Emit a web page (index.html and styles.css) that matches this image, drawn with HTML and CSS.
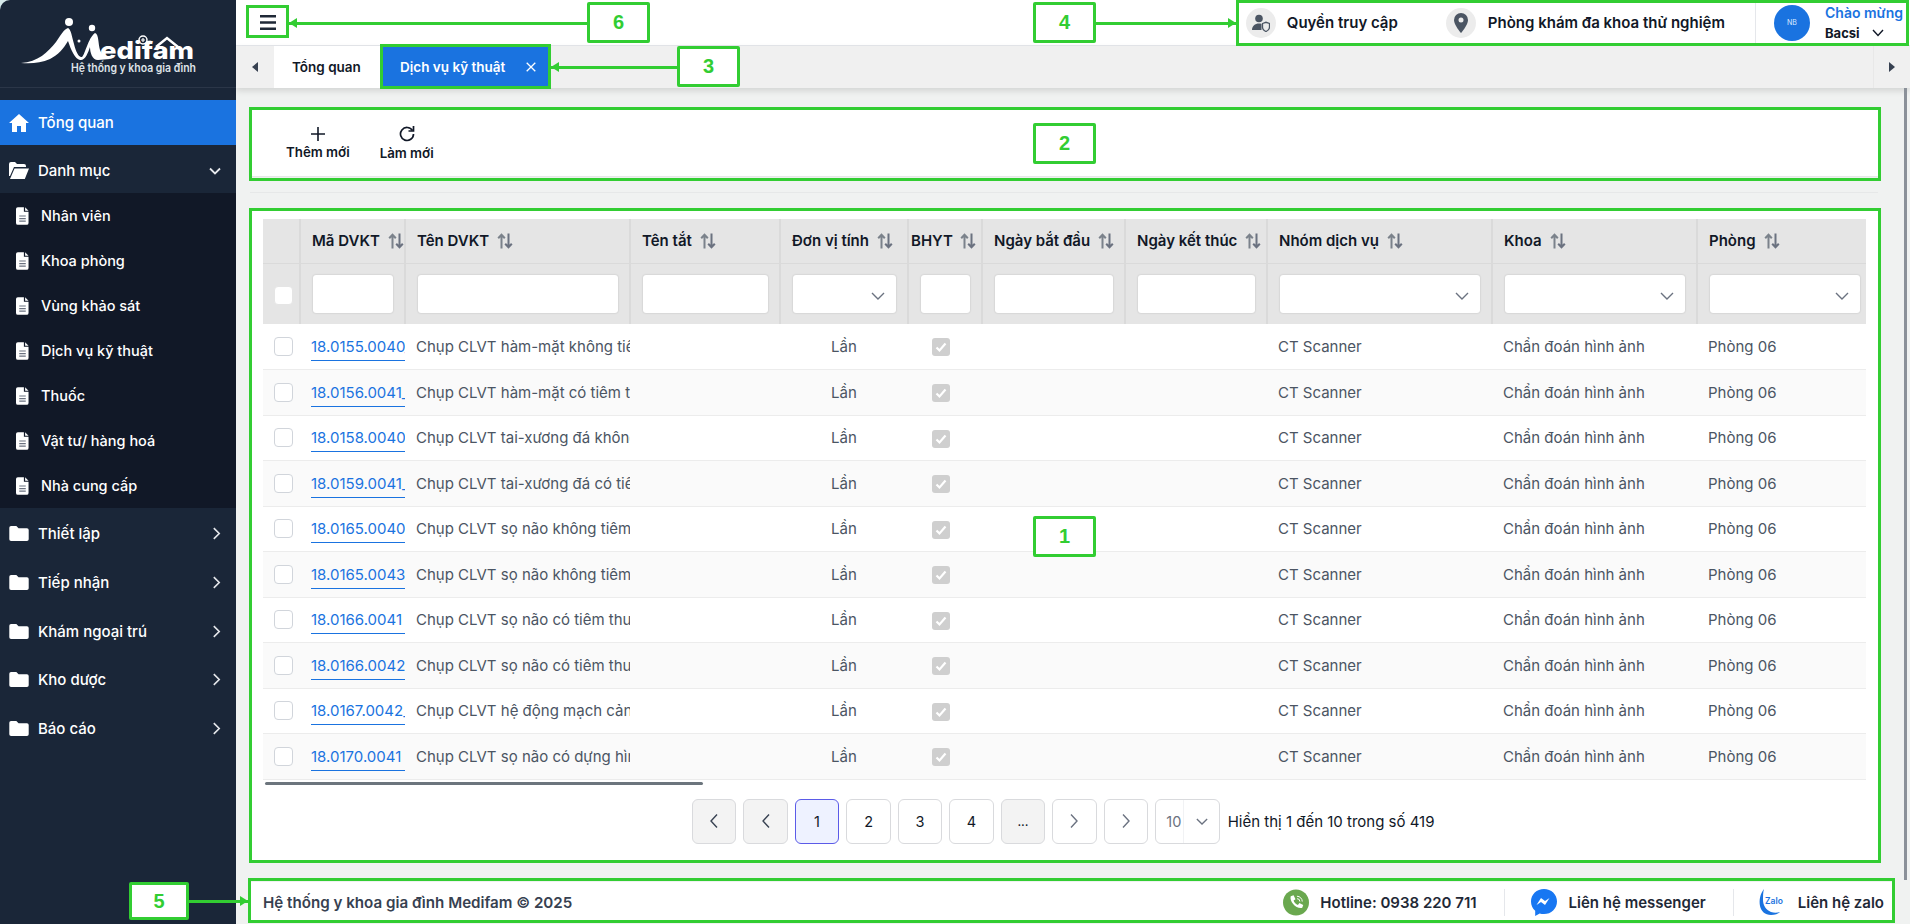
FILE: index.html
```html
<!DOCTYPE html>
<html lang="vi">
<head>
<meta charset="utf-8">
<title>Dịch vụ kỹ thuật</title>
<link rel="stylesheet" href="styles.css">
</head>
<body>
<svg class="defs" width="0" height="0" aria-hidden="true">
  <symbol id="i-sort" viewBox="0 0 16 16"><path d="M4.5 15.500V2M1.200 5.300l3.300-3.600 3.300 3.600" fill="none" stroke="#7b828b" stroke-width="2"/><path d="M11.500.5v13.500M8.200 10.700l3.300 3.600 3.300-3.600" fill="none" stroke="#6b7280" stroke-width="2"/></symbol>
  <symbol id="i-down" viewBox="0 0 14 8"><path d="M1 1l6 6 6-6" fill="none" stroke="#6b7280" stroke-width="1.400"/></symbol>
  <symbol id="i-file" viewBox="0 0 14 19"><path d="M2 0h6.500v5h5v12a2 2 0 0 1-2 2H2a2 2 0 0 1-2-2V2a2 2 0 0 1 2-2z" fill="#fff"/><path d="M9.800 0l3.700 3.800H9.800z" fill="#fff"/><path d="M3.500 9.500h7M3.500 12.300h7M3.500 15h7" stroke="#6b7280" stroke-width="1.200"/></symbol>
  <symbol id="i-folder" viewBox="0 0 22 17"><path d="M2 0h6l2.500 2.500H20a2 2 0 0 1 2 2V15a2 2 0 0 1-2 2H2a2 2 0 0 1-2-2V2a2 2 0 0 1 2-2z" fill="#fff"/></symbol>
  <symbol id="i-right" viewBox="0 0 10 14"><path d="M2 1l6 6-6 6" fill="none" stroke="#e5e7eb" stroke-width="1.800"/></symbol>
  <symbol id="i-page-l" viewBox="0 0 10 16"><path d="M8 1.500L2 8l6 6.500" fill="none" stroke="#374151" stroke-width="1.400"/></symbol>
  <symbol id="i-page-r" viewBox="0 0 10 16"><path d="M2 1.500L8 8l-6 6.500" fill="none" stroke="#6b7280" stroke-width="1.400"/></symbol>
  <symbol id="i-check" viewBox="0 0 18 18"><path d="M4.500 9.500l3 3 6-7" fill="none" stroke="#fff" stroke-width="2.200"/></symbol>
</svg>

<div class="app">
  <aside class="sidebar">
    <div class="brand">
      <svg class="logo" width="236" height="87" viewBox="0 0 236 87" role="img" aria-label="Medifam">
        <path d="M21 63C38 62 48 52 56 42 60 36 64 29 68 28 71 29 72 37 74 44 76 52 79 58 82 57 85 55 88 38 95 33 99 34 98 44 100 50 102 55 106 58 110 59L98 60C92 60 90 52 90 47 88 53 85 61 80 60 75 59 71 50 68 41 64 48 58 55 50 59 41 63 31 64 21 63Z" fill="#fff"/>
        <circle cx="69" cy="22" r="4" fill="#fff"/><circle cx="92" cy="28" r="3.200" fill="#fff"/>
        <circle cx="79" cy="41" r="1.500" fill="#fff"/>
        <circle cx="143" cy="40" r="4" fill="none" stroke="#fff" stroke-width="1.500"/>
        <path d="M143 38v4M141 40h4" stroke="#fff" stroke-width="1.200"/>
        <path d="M156 47l11-9 11 9" fill="none" stroke="#fff" stroke-width="2.500"/>
        <text class="logo-word" x="100" y="59" textLength="94" lengthAdjust="spacingAndGlyphs">edifam</text>
        <text class="logo-tag" x="71" y="71.500" textLength="125" lengthAdjust="spacingAndGlyphs">Hệ thống y khoa gia đình</text>
      </svg>
    </div>
    <nav class="nav">
      <a class="nav-item active">
        <svg class="nav-icon" width="20" height="18" viewBox="0 0 20 18"><path d="M10 0L0 9h3v9h5v-6h4v6h5V9h3z" fill="#fff"/></svg>
        <span>Tổng quan</span>
      </a>
      <a class="nav-item open">
        <svg class="nav-icon" width="20" height="17" viewBox="0 0 20 17"><path d="M0 2a2 2 0 0 1 2-2h4l2 2h7a2 2 0 0 1 2 2v1H5L1 14H0z" fill="#fff"/><path d="M5.500 6.500H20L15.800 17H1z" fill="#fff"/></svg>
        <span>Danh mục</span>
        <svg class="nav-caret" width="12" height="8" viewBox="0 0 12 8"><path d="M1 1.500l5 5 5-5" fill="none" stroke="#e5e7eb" stroke-width="1.800"/></svg>
      </a>
      <div class="sub">
        <a class="sub-item"><svg class="sub-icon" width="13" height="18"><use href="#i-file"/></svg><span>Nhân viên</span></a>
        <a class="sub-item"><svg class="sub-icon" width="13" height="18"><use href="#i-file"/></svg><span>Khoa phòng</span></a>
        <a class="sub-item"><svg class="sub-icon" width="13" height="18"><use href="#i-file"/></svg><span>Vùng khảo sát</span></a>
        <a class="sub-item"><svg class="sub-icon" width="13" height="18"><use href="#i-file"/></svg><span>Dịch vụ kỹ thuật</span></a>
        <a class="sub-item"><svg class="sub-icon" width="13" height="18"><use href="#i-file"/></svg><span>Thuốc</span></a>
        <a class="sub-item"><svg class="sub-icon" width="13" height="18"><use href="#i-file"/></svg><span>Vật tư/ hàng hoá</span></a>
        <a class="sub-item"><svg class="sub-icon" width="13" height="18"><use href="#i-file"/></svg><span>Nhà cung cấp</span></a>
      </div>
      <a class="nav-item closed"><svg class="nav-icon" width="20" height="15"><use href="#i-folder"/></svg><span>Thiết lập</span><svg class="nav-caret" width="9" height="13"><use href="#i-right"/></svg></a>
      <a class="nav-item closed"><svg class="nav-icon" width="20" height="15"><use href="#i-folder"/></svg><span>Tiếp nhận</span><svg class="nav-caret" width="9" height="13"><use href="#i-right"/></svg></a>
      <a class="nav-item closed"><svg class="nav-icon" width="20" height="15"><use href="#i-folder"/></svg><span>Khám ngoại trú</span><svg class="nav-caret" width="9" height="13"><use href="#i-right"/></svg></a>
      <a class="nav-item closed"><svg class="nav-icon" width="20" height="15"><use href="#i-folder"/></svg><span>Kho dược</span><svg class="nav-caret" width="9" height="13"><use href="#i-right"/></svg></a>
      <a class="nav-item closed"><svg class="nav-icon" width="20" height="15"><use href="#i-folder"/></svg><span>Báo cáo</span><svg class="nav-caret" width="9" height="13"><use href="#i-right"/></svg></a>
    </nav>
  </aside>

  <main class="main">
    <header class="topbar">
      <button class="burger" aria-label="Menu">
        <svg width="16" height="15" viewBox="0 0 16 15"><path d="M0 1.300h16M0 7.500h16M0 13.700h16" stroke="#1f2937" stroke-width="2.400"/></svg>
      </button>
      <div class="top-right">
        <div class="top-item">
          <span class="round-icon"><svg width="18" height="18" viewBox="0 0 18 18"><circle cx="7" cy="4.500" r="3.800" fill="#4b5563"/><path d="M0 16c0-4 3-6.500 7-6.500 1 0 2 .2 2.500.4V16z" fill="#4b5563"/><path d="M10.500 9.500l3.500-1.200 3.500 1.200v3.500c0 2.200-1.700 3.800-3.500 4.500-1.800-.7-3.500-2.300-3.500-4.500z" fill="none" stroke="#4b5563" stroke-width="1.300"/></svg></span>
          <span>Quyền truy cập</span>
        </div>
        <div class="top-item clinic">
          <span class="round-icon"><svg width="14" height="20" viewBox="0 0 14 20"><path d="M7 0a7 7 0 0 1 7 7c0 5-7 13-7 13S0 12 0 7a7 7 0 0 1 7-7z" fill="#4b5563"/><circle cx="7" cy="7" r="2.500" fill="#ececec"/></svg></span>
          <span>Phòng khám đa khoa thử nghiệm</span>
        </div>
        <div class="user">
          <span class="avatar">NB</span>
          <div class="user-text">
            <span class="hello">Chào mừng</span>
            <span class="user-name">Bacsi <svg width="12" height="8" viewBox="0 0 12 8"><path d="M1 1l5 5.500L11 1" fill="none" stroke="#111827" stroke-width="1.400"/></svg></span>
          </div>
        </div>
      </div>
    </header>

    <div class="tabbar">
      <button class="tab-arrow" aria-label="Trước"><svg width="6" height="10" viewBox="0 0 6 10"><path d="M6 0L0 5l6 5z" fill="#374151"/></svg></button>
      <a class="tab">Tổng quan</a>
      <a class="tab current">Dịch vụ kỹ thuật <svg class="tab-x" width="10" height="10" viewBox="0 0 10 10"><path d="M.7.700l8.600 8.600M9.300.700L.7 9.300" stroke="#fff" stroke-width="1.300"/></svg></a>
      <span class="tab-fill"></span>
      <button class="tab-arrow end" aria-label="Sau"><svg width="6" height="10" viewBox="0 0 6 10"><path d="M0 0l6 5-6 5z" fill="#374151"/></svg></button>
    </div>

    <div class="content">
      <section class="toolbar">
        <button class="tool">
          <svg width="14" height="14" viewBox="0 0 14 14"><path d="M7 0v14M0 7h14" stroke="#111827" stroke-width="1.600"/></svg>
          <span>Thêm mới</span>
        </button>
        <button class="tool">
          <svg width="16" height="16" viewBox="0 0 16 16"><path d="M13.500 4.500A6.500 6.500 0 1 0 14.500 8" fill="none" stroke="#111827" stroke-width="1.700"/><path d="M14.500 0v5h-5" fill="none" stroke="#111827" stroke-width="1.700"/></svg>
          <span>Làm mới</span>
        </button>
      </section>
      <hr class="rule">
      <section class="card">
        <div class="table-wrap">
          <table class="grid">
            <colgroup>
              <col class="c-check"><col class="c-code"><col class="c-name"><col class="c-short"><col class="c-unit"><col class="c-bhyt"><col class="c-start"><col class="c-end"><col class="c-group"><col class="c-dept"><col class="c-room">
            </colgroup>
            <thead>
              <tr class="head-row">
                <th></th>
                <th><span class="th">Mã DVKT <svg width="16" height="16"><use href="#i-sort"/></svg></span></th>
                <th><span class="th">Tên DVKT <svg width="16" height="16"><use href="#i-sort"/></svg></span></th>
                <th><span class="th">Tên tắt <svg width="16" height="16"><use href="#i-sort"/></svg></span></th>
                <th><span class="th">Đơn vị tính <svg width="16" height="16"><use href="#i-sort"/></svg></span></th>
                <th class="tight"><span class="th">BHYT <svg width="16" height="16"><use href="#i-sort"/></svg></span></th>
                <th><span class="th">Ngày bắt đầu <svg width="16" height="16"><use href="#i-sort"/></svg></span></th>
                <th><span class="th">Ngày kết thúc <svg width="16" height="16"><use href="#i-sort"/></svg></span></th>
                <th><span class="th">Nhóm dịch vụ <svg width="16" height="16"><use href="#i-sort"/></svg></span></th>
                <th><span class="th">Khoa <svg width="16" height="16"><use href="#i-sort"/></svg></span></th>
                <th><span class="th">Phòng <svg width="16" height="16"><use href="#i-sort"/></svg></span></th>
              </tr>
              <tr class="filter-row">
                <th class="check-cell"><span class="box head-box"></span></th>
                <th><span class="field"></span></th>
                <th><span class="field"></span></th>
                <th><span class="field"></span></th>
                <th><span class="field drop"><svg width="14" height="8"><use href="#i-down"/></svg></span></th>
                <th><span class="field"></span></th>
                <th><span class="field"></span></th>
                <th><span class="field"></span></th>
                <th><span class="field drop"><svg width="14" height="8"><use href="#i-down"/></svg></span></th>
                <th><span class="field drop"><svg width="14" height="8"><use href="#i-down"/></svg></span></th>
                <th><span class="field drop"><svg width="14" height="8"><use href="#i-down"/></svg></span></th>
              </tr>
            </thead>
            <tbody>
              <tr><td class="check-cell"><span class="box"></span></td><td class="code"><a>18.0155.0040_</a></td><td class="name">Chụp CLVT hàm-mặt không tiêm thuốc cản quang</td><td></td><td class="unit">Lần</td><td class="bhyt"><span class="tick"><svg width="18" height="18"><use href="#i-check"/></svg></span></td><td></td><td></td><td>CT Scanner</td><td>Chẩn đoán hình ảnh</td><td>Phòng 06</td></tr>
              <tr><td class="check-cell"><span class="box"></span></td><td class="code"><a>18.0156.0041_</a></td><td class="name">Chụp CLVT hàm-mặt có tiêm thuốc cản quang</td><td></td><td class="unit">Lần</td><td class="bhyt"><span class="tick"><svg width="18" height="18"><use href="#i-check"/></svg></span></td><td></td><td></td><td>CT Scanner</td><td>Chẩn đoán hình ảnh</td><td>Phòng 06</td></tr>
              <tr><td class="check-cell"><span class="box"></span></td><td class="code"><a>18.0158.0040</a></td><td class="name">Chụp CLVT tai-xương đá không tiêm thuốc</td><td></td><td class="unit">Lần</td><td class="bhyt"><span class="tick"><svg width="18" height="18"><use href="#i-check"/></svg></span></td><td></td><td></td><td>CT Scanner</td><td>Chẩn đoán hình ảnh</td><td>Phòng 06</td></tr>
              <tr><td class="check-cell"><span class="box"></span></td><td class="code"><a>18.0159.0041_</a></td><td class="name">Chụp CLVT tai-xương đá có tiêm thuốc</td><td></td><td class="unit">Lần</td><td class="bhyt"><span class="tick"><svg width="18" height="18"><use href="#i-check"/></svg></span></td><td></td><td></td><td>CT Scanner</td><td>Chẩn đoán hình ảnh</td><td>Phòng 06</td></tr>
              <tr><td class="check-cell"><span class="box"></span></td><td class="code"><a>18.0165.0040</a></td><td class="name">Chụp CLVT sọ não không tiêm thuốc</td><td></td><td class="unit">Lần</td><td class="bhyt"><span class="tick"><svg width="18" height="18"><use href="#i-check"/></svg></span></td><td></td><td></td><td>CT Scanner</td><td>Chẩn đoán hình ảnh</td><td>Phòng 06</td></tr>
              <tr><td class="check-cell"><span class="box"></span></td><td class="code"><a>18.0165.0043</a></td><td class="name">Chụp CLVT sọ não không tiêm thuốc</td><td></td><td class="unit">Lần</td><td class="bhyt"><span class="tick"><svg width="18" height="18"><use href="#i-check"/></svg></span></td><td></td><td></td><td>CT Scanner</td><td>Chẩn đoán hình ảnh</td><td>Phòng 06</td></tr>
              <tr><td class="check-cell"><span class="box"></span></td><td class="code"><a>18.0166.0041</a></td><td class="name">Chụp CLVT sọ não có tiêm thuốc</td><td></td><td class="unit">Lần</td><td class="bhyt"><span class="tick"><svg width="18" height="18"><use href="#i-check"/></svg></span></td><td></td><td></td><td>CT Scanner</td><td>Chẩn đoán hình ảnh</td><td>Phòng 06</td></tr>
              <tr><td class="check-cell"><span class="box"></span></td><td class="code"><a>18.0166.0042</a></td><td class="name">Chụp CLVT sọ não có tiêm thuốc</td><td></td><td class="unit">Lần</td><td class="bhyt"><span class="tick"><svg width="18" height="18"><use href="#i-check"/></svg></span></td><td></td><td></td><td>CT Scanner</td><td>Chẩn đoán hình ảnh</td><td>Phòng 06</td></tr>
              <tr><td class="check-cell"><span class="box"></span></td><td class="code"><a>18.0167.0042_</a></td><td class="name">Chụp CLVT hệ động mạch cảnh</td><td></td><td class="unit">Lần</td><td class="bhyt"><span class="tick"><svg width="18" height="18"><use href="#i-check"/></svg></span></td><td></td><td></td><td>CT Scanner</td><td>Chẩn đoán hình ảnh</td><td>Phòng 06</td></tr>
              <tr><td class="check-cell"><span class="box"></span></td><td class="code"><a>18.0170.0041</a></td><td class="name">Chụp CLVT sọ não có dựng hình ảnh</td><td></td><td class="unit">Lần</td><td class="bhyt"><span class="tick"><svg width="18" height="18"><use href="#i-check"/></svg></span></td><td></td><td></td><td>CT Scanner</td><td>Chẩn đoán hình ảnh</td><td>Phòng 06</td></tr>
            </tbody>
          </table>
        </div>
        <div class="hscroll"><span class="hthumb"></span></div>
        <div class="pager">
          <button class="pg off"><svg width="10" height="16"><use href="#i-page-l"/></svg></button>
          <button class="pg off"><svg width="10" height="16"><use href="#i-page-l"/></svg></button>
          <button class="pg now">1</button>
          <button class="pg">2</button>
          <button class="pg">3</button>
          <button class="pg">4</button>
          <button class="pg off dots">...</button>
          <button class="pg"><svg width="10" height="16"><use href="#i-page-r"/></svg></button>
          <button class="pg"><svg width="10" height="16"><use href="#i-page-r"/></svg></button>
          <span class="size"><span class="size-num">10</span><span class="size-arrow"><svg width="12" height="7" viewBox="0 0 14 8"><path d="M1 1l6 6 6-6" fill="none" stroke="#6b7280" stroke-width="1.500"/></svg></span></span>
          <span class="count">Hiển thị 1 đến 10 trong số 419</span>
        </div>
      </section>
    </div>

    <footer class="footer">
      <strong class="copy">Hệ thống y khoa gia đình Medifam © 2025</strong>
      <div class="contacts">
        <span class="contact phone">
          <svg width="26" height="27" viewBox="0 0 27 27"><circle cx="13.500" cy="13.500" r="13.500" fill="#6aa84f"/><path d="M8 7l3-1 2 4-2 1.500c.6 2 2.500 4 4.500 4.500l1.500-2 4 2-1 3c-6 1.500-13.500-6-12-12z" fill="#fff"/><path d="M14.500 7a5.500 5.500 0 0 1 5.500 5.500M14.500 9.500a3 3 0 0 1 3 3" fill="none" stroke="#fff" stroke-width="1"/></svg>
          Hotline: 0938 220 711
        </span>
        <span class="contact msg">
          <svg width="26" height="27" viewBox="0 0 26 27"><path d="M13 0C5.800 0 0 5.400 0 12.500c0 3.700 1.600 7 4.200 9.300V27l4.500-2.500c1.300.4 2.800.6 4.300.6 7.200 0 13-5.500 13-12.600S20.200 0 13 0z" fill="#1877f2"/><path d="M5.500 16l4.500-7 4 3 4.500-3-4.500 7-4-3z" fill="#fff"/></svg>
          Liên hệ messenger
        </span>
        <span class="contact zalo">
          <svg class="zalo-mark" width="27" height="28" viewBox="0 0 27 28"><path d="M6 1C2 6 1 12 2 18c1 5 5 9 11 9 4 0 7-1 9-3-3 1-6 1-9 0-5-2-8-7-8-12C5 8 5 4 6 1z" fill="#1a73e0"/><text class="zalo-word" x="7" y="16">Zalo</text></svg>
          Liên hệ zalo
        </span>
      </div>
    </footer>
  </main>
</div>

<div class="overlay">
  <span class="vthumb"></span>
  <span class="mark m-burger"></span>
  <span class="mark m-tab"></span>
  <span class="mark m-tools"></span>
  <span class="mark m-card"></span>
  <span class="mark m-top"></span>
  <span class="mark m-foot"></span>
  <span class="lab l1">1</span>
  <span class="lab l2">2</span>
  <span class="lab l3">3</span>
  <span class="lab l4">4</span>
  <span class="lab l5">5</span>
  <span class="lab l6">6</span>
  <span class="arrow a6"></span>
  <span class="arrow a3"></span>
  <span class="arrow a4 to-right"></span>
  <span class="arrow a5 to-right"></span>
</div>
</body>
</html>
```

FILE: styles.css
```css
* { box-sizing: border-box; }
html, body { margin: 0; height: 100%; }
body {
  font-family: Inter, "Noto Sans", sans-serif;
  font-size: 14px;
  color: #1f2937;
  background: #f0f2f1;
  overflow: hidden;
  position: relative;
}
.defs { display: block; height: 0; }
button { font: inherit; color: inherit; background: none; border: 0; padding: 0; }

.app { display: flex; width: 1910px; height: 924px; background: #d6e9ea; }

/* Sidebar */
.sidebar {
  width: 236px;
  flex: none;
  background: #1a2638;
  color: #fff;
  border-top-left-radius: 10px;
  overflow: hidden;
}
.brand { height: 88px; border-bottom: 1px solid #2b3648; }
.logo { display: block; }
.logo-word { font: 800 24px Inter, sans-serif; fill: #fff; }
.logo-tag { font: 600 11.500px Inter, sans-serif; fill: #dfe3e8; }
.nav { margin-top: 12px; }
.nav-item {
  display: flex;
  align-items: center;
  height: 48.670px;
  padding: 3px 15px 0 9px;
  font-size: 15px;
  font-weight: 500;
}
.nav-item.active { height: 45px; padding-top: 0; background: #1a73e0; }
.nav-item.open { height: 48px; }
.nav-icon { flex: none; margin-right: 9px; }
.nav-item.active .nav-icon { margin-top: 1px; }
.nav-caret { margin-left: auto; }
.sub { background: #111827; }
.sub-item {
  display: flex;
  align-items: center;
  height: 45px;
  padding-left: 16px;
  font-size: 14.500px;
  font-weight: 500;
}
.sub-icon { flex: none; margin-right: 12px; }

/* Top bar */
.main { flex: 1; min-width: 0; display: flex; flex-direction: column; background: #f0f2f1; }
.topbar {
  height: 46px;
  flex: none;
  background: #fff;
  display: flex;
  align-items: center;
  justify-content: space-between;
  border-bottom: 1px solid #e5e7eb;
}
.burger { margin-left: 24px; width: 16px; height: 15px; display: block; }
.burger svg { display: block; }
.top-right { display: flex; align-items: center; height: 100%; padding-left: 9px; }
.top-item {
  display: flex;
  align-items: center;
  gap: 11px;
  font-size: 15px;
  font-weight: 600;
  color: #111827;
}
.top-item.clinic { margin-left: 48px; gap: 12px; }
.round-icon {
  width: 30px;
  height: 30px;
  border-radius: 50%;
  background: #ececec;
  display: flex;
  align-items: center;
  justify-content: center;
}
.user {
  display: flex;
  align-items: center;
  height: 40px;
  margin-left: 30px;
  padding-left: 18px;
  padding-right: 11px;
  border-left: 1px solid #e5e7eb;
}
.avatar {
  width: 36px;
  height: 36px;
  border-radius: 50%;
  background: #1a73e0;
  color: #dbeafe;
  font-size: 7px;
  display: flex;
  align-items: center;
  justify-content: center;
}
.user-text { display: flex; flex-direction: column; margin-left: 15px; gap: 4px; width: 74px; }
.hello { color: #1a73e0; font-size: 14px; font-weight: 600; line-height: 16px; white-space: nowrap; }
.user-name { font-size: 13px; font-weight: 700; color: #111827; line-height: 16px; display: flex; align-items: center; gap: 12px; }

/* Tabs */
.tabbar {
  height: 42px;
  flex: none;
  display: flex;
  background: #f0f0f0;
  box-shadow: 0 3px 6px rgba(0, 0, 0, .12);
  position: relative;
}
.tab-arrow { width: 38px; display: flex; align-items: center; justify-content: center; }
.tab-arrow.end { width: 37px; border-left: 1px solid #e8e8e8; }
.tab {
  display: flex;
  align-items: center;
  background: #fff;
  color: #111827;
  font-size: 13.500px;
  font-weight: 600;
  padding: 0 18px;
  width: 106px;
  white-space: nowrap;
}
.tab.current { width: 171px; background: #1a73e0; color: #fff; padding: 0 0 0 20px; }
.tab-x { margin-left: 21px; }
.tab-fill { flex: 1; }

/* Content */
.content { flex: 1; min-height: 0; padding: 22px 32px 0 14px; }
.toolbar {
  height: 66px;
  background: #fff;
  display: flex;
  align-items: center;
  padding-left: 36px;
  gap: 30px;
  box-shadow: 0 0 2px rgba(0, 0, 0, .12);
}
.tool {
  display: flex;
  flex-direction: column;
  align-items: center;
  gap: 3px;
  font-size: 13.300px;
  font-weight: 600;
  color: #111827;
  white-space: nowrap;
}
.tool svg { display: block; }
.tool span { line-height: 16px; }
.rule { height: 1px; border: 0; background: #e6e8e8; margin: 16px 0 17px; }
.card { height: 650px; background: #fff; padding: 9px 12px 0 13px; position: relative; border-bottom: 0; }
.table-wrap { overflow: hidden; width: 1603px; }

/* Table */
.grid { border-collapse: collapse; table-layout: fixed; width: 1608px; }
.c-check { width: 37px; }
.c-code { width: 105px; }
.c-name { width: 225px; }
.c-short { width: 150px; }
.c-unit { width: 128px; }
.c-bhyt { width: 74px; }
.c-start { width: 143px; }
.c-end { width: 142px; }
.c-group { width: 225px; }
.c-dept { width: 205px; }
.c-room { width: 174px; }
th {
  background: #e5e5e5;
  border-right: 2px solid #dadada;
  border-bottom: 1px solid #dadada;
  padding: 0 11px 0 12px;
  text-align: left;
  font-weight: 600;
  color: #111827;
}
th:last-child { border-right: 0; }
.head-row { height: 44px; }
.filter-row { height: 61px; }
.filter-row th { border-bottom: 0; }
.th { display: inline-flex; align-items: center; gap: 8px; font-size: 15px; white-space: nowrap; margin-left: -1px; }
.tight { padding: 0 0 0 2px; }
.tight .th { gap: 7px; margin-left: 0; }
.check-cell { padding: 0 0 0 11px; }
.box {
  display: block;
  width: 19px;
  height: 19px;
  background: #fff;
  border: 1px solid #d1d5db;
  border-radius: 4px;
}
.head-box { margin-top: 3px; border-color: #e5e5e5; }
.field {
  display: flex;
  align-items: center;
  justify-content: flex-end;
  height: 38px;
  background: #fff;
  border-radius: 3px;
  box-shadow: 0 0 2px rgba(0, 0, 0, .2);
}
.field.drop { padding-right: 11px; }
.field.drop svg { margin-top: 4px; }
tbody tr { height: 45.500px; border-bottom: 1px solid #ececec; }
tbody tr:nth-child(even) { background: #fafafa; }
td {
  padding: 0 11px 0 11px;
  font-size: 15px;
  color: #4b5563;
  white-space: nowrap;
  overflow: hidden;
}
.code { padding: 0 0 0 11px; }
.code a {
  display: block;
  overflow: hidden;
  color: #1a73e0;
  font-size: 15px;
  line-height: 20px;
  padding-bottom: 3px;
  margin-top: 5px;
  border-bottom: 1px solid #1a73e0;
}
.name { padding-right: 0; }
.unit { text-align: center; padding: 0; }
.bhyt { text-align: center; padding: 0 8px 0 0; }
.tick {
  display: inline-block;
  width: 18px;
  height: 18px;
  border-radius: 3px;
  background: #cfcfcf;
  vertical-align: middle;
}
.tick svg { display: block; }

/* Pager */
.hscroll { height: 4px; margin-top: 2px; }
.hthumb { display: block; width: 438px; height: 3px; margin-left: 2px; border-radius: 2px; background: #6c757d; }
.pager {
  display: flex;
  align-items: center;
  gap: 7.300px;
  margin-top: 13px;
  padding-left: 429px;
  height: 45px;
}
.pg {
  width: 44.200px;
  height: 45px;
  flex: none;
  background: #fff;
  border: 1px solid #d9dadd;
  border-radius: 6px;
  color: #111827;
  font-size: 14.500px;
  display: flex;
  align-items: center;
  justify-content: center;
}
.pg.off { background: #f3f3f3; }
.pg.now { background: #eef2ff; border-color: #5b5be8; }
.dots { font-size: 13px; }
.size {
  display: flex;
  width: 65px;
  height: 45px;
  background: #fff;
  border: 1px solid #d9dadd;
  border-radius: 6px;
  color: #6b7280;
  font-size: 14.500px;
}
.size-num { width: 27px; display: flex; align-items: center; padding-left: 10px; }
.size-arrow { flex: 1; display: flex; align-items: center; justify-content: center; border-left: 1px solid #f1f2f4; }
.count { margin-left: 0; font-size: 15px; color: #111827; white-space: nowrap; }

/* Footer */
.footer {
  height: 38px;
  flex: none;
  margin: 0 15px 4px 14px;
  background: #fff;
  display: flex;
  align-items: center;
  justify-content: space-between;
  padding: 2px 11px 0 13px;
}
.copy { font-size: 15.150px; font-weight: 600; color: #374151; }
.contacts { display: flex; align-items: center; font-size: 15px; font-weight: 600; color: #1f2937; }
.contact { display: flex; align-items: center; gap: 11px; white-space: nowrap; height: 27px; }
.phone { padding-right: 27px; border-right: 1px solid #e5e7eb; }
.msg { padding: 0 27px 0 26px; gap: 12px; border-right: 1px solid #e5e7eb; }
.zalo { padding-left: 24px; gap: 13px; }
.zalo-mark { flex: none; }
.zalo-word { font-size: 8.500px; fill: #1a73e0; font-weight: 600; }

/* Annotations laid over the screenshot */
.overlay { position: absolute; inset: 0; pointer-events: none; }
.vthumb { position: absolute; left: 1904px; top: 88px; width: 3px; height: 792px; background: #8b9199; }
.mark { position: absolute; border: 3px solid #32cd32; }
.m-burger { left: 246px; top: 5px; width: 43px; height: 33px; }
.m-tab { left: 380px; top: 44px; width: 171px; height: 45px; }
.m-tools { left: 249px; top: 107px; width: 1632px; height: 74px; }
.m-card { left: 249px; top: 208px; width: 1632px; height: 655px; }
.m-top { left: 1236px; top: 0; width: 673px; height: 46px; }
.m-foot { left: 248px; top: 878px; width: 1647px; height: 45px; }
.lab {
  position: absolute;
  display: flex;
  align-items: center;
  justify-content: center;
  width: 63px;
  height: 41px;
  background: #fff;
  border: 3px solid #32cd32;
  border-radius: 2px;
  color: #32cd32;
  font: 700 20px "Liberation Sans", Arial, sans-serif;
}
.l1 { left: 1033px; top: 516px; }
.l2 { left: 1033px; top: 123px; }
.l3 { left: 677px; top: 46px; }
.l4 { left: 1033px; top: 2px; }
.l5 { left: 129px; top: 882px; width: 60px; height: 38px; }
.l6 { left: 587px; top: 2px; }
.arrow { position: absolute; height: 3px; background: #32cd32; }
.arrow::after {
  content: "";
  position: absolute;
  top: -4px;
  left: 0;
  border: 5.500px solid transparent;
  border-left: 0;
  border-right: 8px solid #32cd32;
}
.arrow.to-right::after {
  left: auto;
  right: 0;
  border: 5.500px solid transparent;
  border-right: 0;
  border-left: 8px solid #32cd32;
}
.a6 { left: 289px; top: 22px; width: 298px; }
.a3 { left: 551px; top: 66px; width: 126px; }
.a4 { left: 1096px; top: 22px; width: 140px; }
.a5 { left: 189px; top: 900px; width: 59px; }
```
